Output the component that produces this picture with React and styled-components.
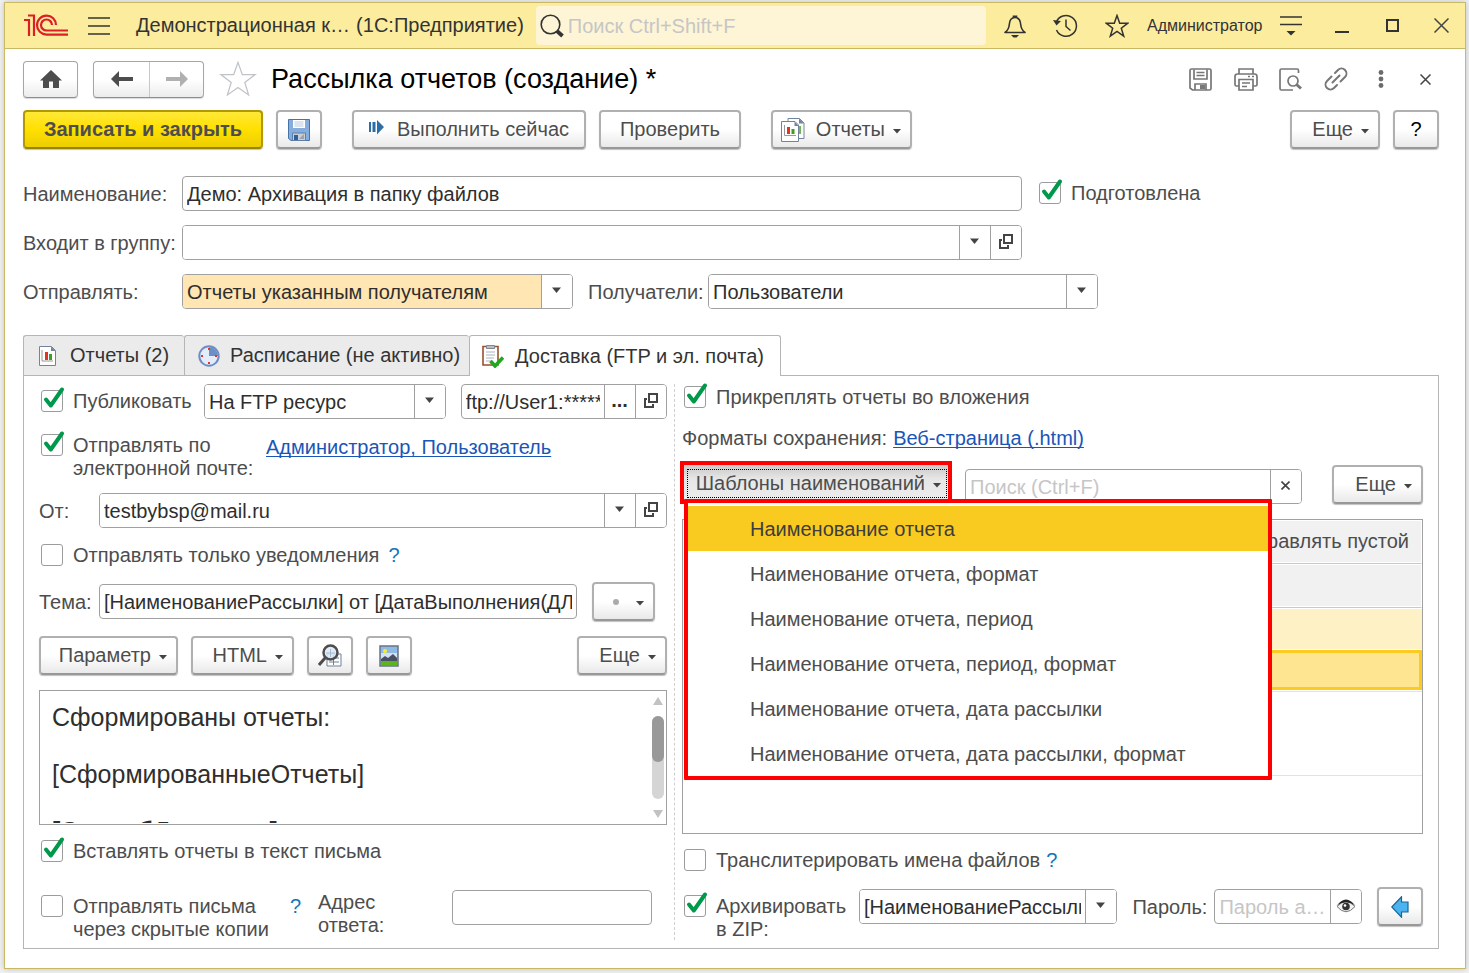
import React from "react";
import styled, { createGlobalStyle, css } from "styled-components";

const GlobalStyle = createGlobalStyle`
  * {
    box-sizing: border-box;
  }
  body {
    margin: 0;
    background: #f1f1f1;
    color: #4d4d4d;
    font: 20px/23px "Liberation Sans", Arial, sans-serif;
  }
  button, input, select {
    font: inherit;
    color: inherit;
  }
`;

/* ---------- window ---------- */

const Window = styled.div`
  display: flex;
  flex-direction: column;
  min-height: calc(100vh - 6px);
  margin: 2px 3px 4px 4px;
  background: #fff;
  border: 1px solid #c9b965;
  box-shadow: 0 0 6px rgba(0, 0, 0, 0.2);
`;

const TitleBar = styled.header`
  display: flex;
  align-items: center;
  height: 46px;
  padding-left: 19px;
  background: #fbec9e;
  border-bottom: 1px solid #c9b965;
  color: #333;
`;

const PlainButton = styled.button`
  display: flex;
  align-items: center;
  justify-content: center;
  flex: none;
  width: ${(props) => props.$width || 51}px;
  height: 36px;
  padding: 0;
  border: 0;
  background: none;
  cursor: pointer;
`;

const AppTitle = styled.div`
  display: flex;
  gap: 6px;
  padding-left: 8px;
  white-space: nowrap;
`;

const GlobalSearch = styled.label`
  display: flex;
  flex: 1;
  align-items: center;
  gap: 4px;
  min-width: 0;
  height: 39px;
  margin: 0 3px 0 12px;
  padding-left: 4px;
  background: #fdf5d5;
  border-radius: 4px;
`;

const SearchInput = styled.input`
  flex: 1;
  min-width: 0;
  padding: 1px 0 0;
  border: 0;
  outline: 0;
  background: none;
  &::placeholder {
    color: #c6c6c6;
  }
`;

const User = styled.button`
  width: 123px;
  padding: 0 0 0 5px;
  border: 0;
  background: none;
  font-size: 16px;
  text-align: left;
`;

/* ---------- form head ---------- */

const FormHead = styled.div`
  display: flex;
  align-items: center;
  margin-top: 11px;
  padding: 0 17px 0 18px;
`;

const NavGroup = styled.div`
  display: flex;
  height: 37px;
  margin-right: 15px;
  border: 1px solid #a6a6a6;
  border-bottom-color: #8e8e8e;
  border-radius: 4px;
  background: linear-gradient(#fff 50%, #ececec);
  box-shadow: 0 1px 1px rgba(0, 0, 0, 0.15);
`;

const NavButton = styled.button`
  display: flex;
  align-items: center;
  justify-content: center;
  width: ${(props) => props.$width}px;
  padding: 0;
  border: 0;
  background: none;
  & + & {
    border-left: 1px solid #c8c8c8;
  }
`;

const Title = styled.h1`
  flex: 1;
  margin: 0 0 0 14px;
  color: #000;
  font-size: 27px;
  font-weight: 400;
  line-height: 32px;
  white-space: nowrap;
`;

const Body = styled.main`
  display: flex;
  flex: 1;
  flex-direction: column;
  padding: 12px 26px 19px 18px;
`;

const Toolbar = styled.div`
  display: flex;
  gap: 13px;
  margin-bottom: 27px;
`;

const Spacer = styled.span`
  width: ${(props) => props.$width}px;
  flex: ${(props) => (props.$width ? "none" : 1)};
`;

const Button = styled.button`
  display: flex;
  align-items: center;
  justify-content: center;
  gap: ${(props) => props.$gap || 8}px;
  flex: none;
  width: ${(props) => (props.$width ? props.$width + "px" : "auto")};
  height: 39px;
  padding: 0;
  border: 2px solid #b0b0b0;
  border-bottom-color: #989898;
  border-radius: 4px;
  background: linear-gradient(#fff 50%, #e9e9e9);
  box-shadow: 0 1px 1px rgba(0, 0, 0, 0.25);
  white-space: nowrap;
  cursor: pointer;
  ${(props) =>
    props.$menu &&
    css`
      justify-content: flex-end;
      padding-right: 9px;
    `}
  ${(props) =>
    props.$primary &&
    css`
      border-color: #b09a00;
      border-bottom-color: #978400;
      background: linear-gradient(#ffe838, #ffe000 50%, #edce00);
      font-weight: 700;
    `}
`;

const HelpButton = styled(Button)`
  color: #000;
`;

/* ---------- fields ---------- */

const Row = styled.div`
  display: flex;
  flex: none;
  align-items: ${(props) => props.$align || "center"};
  gap: ${(props) => props.$gap || 0}px;
  height: ${(props) => (props.$height ? props.$height + "px" : "auto")};
  margin-top: ${(props) => props.$top || 0}px;
  padding-right: ${(props) => props.$right || 0}px;
`;

const Label = styled.label`
  flex: none;
  width: ${(props) => (props.$width ? props.$width + "px" : "auto")};
  padding-top: ${(props) => props.$top || 2}px;
  white-space: nowrap;
`;

const Field = styled.div`
  display: flex;
  flex: ${(props) => props.$grow || 1} 1 0;
  min-width: 0;
  max-width: ${(props) => (props.$max ? props.$max + "px" : "none")};
  height: 35px;
  overflow: hidden;
  border: 1px solid #a0a0a0;
  border-radius: 4px;
  background: #fff;
  color: #2e2e2e;
`;

const Input = styled.input`
  flex: 1;
  min-width: 0;
  padding: 2px 4px 0;
  border: 0;
  outline: 0;
  background: none;
  text-overflow: ${(props) => (props.$ellipsis ? "ellipsis" : "clip")};
  &::placeholder {
    color: #c6c6c6;
  }
`;

const SelectBox = styled.div`
  display: grid;
  flex: 1;
  grid-template-columns: minmax(0, 1fr) 31px;
  min-width: 0;
`;

const Select = styled.select`
  grid-area: 1 / 1 / 2 / 3;
  min-width: 0;
  padding: 2px 35px 0 4px;
  border: 0;
  outline: 0;
  appearance: none;
  background: ${(props) => (props.$marked ? "#ffe6b3" : "#fff")};
`;

const cell = css`
  display: flex;
  align-items: center;
  justify-content: center;
  padding: 0 1px 2px 0;
  border: 0;
  border-left: 1px solid #a0a0a0;
  background: #fff;
`;

const ArrowCell = styled.span`
  ${cell}
  grid-area: 1 / 2 / 2 / 3;
  pointer-events: none;
`;

const CellButton = styled.button`
  ${cell}
  flex: none;
  width: 31px;
  font-weight: 700;
`;

const CheckLabel = styled.label`
  display: flex;
  flex: none;
  gap: 10px;
  width: ${(props) => (props.$width ? props.$width + "px" : "auto")};
  margin-left: ${(props) => props.$left || 0}px;
  padding: ${(props) => props.$top || 0}px 0 0 2px;
  white-space: nowrap;
`;

const CheckBox = styled.span`
  position: relative;
  flex: none;
  width: 22px;
  height: 22px;
  svg {
    position: absolute;
    left: 0;
    bottom: 0;
    pointer-events: none;
  }
`;

const CheckInput = styled.input`
  display: block;
  width: 22px;
  height: 22px;
  margin: 0;
  appearance: none;
  border: 1px solid #9c9c9c;
  border-radius: 3px;
  background: #fff;
`;

const Link = styled.a`
  padding-top: ${(props) => props.$top || 0}px;
  color: #1a56b8;
  text-decoration: underline 1px;
  text-decoration-skip-ink: none;
  text-underline-offset: 2px;
  white-space: nowrap;
`;

const Hint = styled.button`
  width: 12px;
  margin-left: ${(props) => props.$left || 0}px;
  padding: ${(props) => props.$top || 0}px 0 0;
  border: 0;
  background: none;
  color: #0f76bc;
  text-align: left;
`;

const ArchiveFields = styled.div`
  display: flex;
  flex: 1;
  align-items: center;
  gap: 15px;
  min-width: 0;
`;

/* ---------- tabs ---------- */

const Tabs = styled.div`
  display: flex;
  margin-top: 26px;
`;

const Tab = styled.button`
  display: flex;
  align-items: center;
  gap: ${(props) => props.$gap}px;
  width: ${(props) => props.$width}px;
  height: 40px;
  padding: 0 0 0 ${(props) => props.$left}px;
  border: 1px solid #b5b5b5;
  border-bottom: 0;
  border-right-width: ${(props) => (props.$active ? 1 : 0)}px;
  border-radius: 3px 3px 0 0;
  background: #ebebeb;
  color: #333;
  white-space: nowrap;
  ${(props) =>
    props.$active &&
    css`
      z-index: 1;
      height: 41px;
      margin-bottom: -1px;
      background: #fff;
    `}
`;

const Panel = styled.section`
  display: grid;
  flex: 1;
  grid-template-columns: minmax(0, 628fr) 15px minmax(0, 741fr);
  padding: 0 15px 8px;
  border: 1px solid #b5b5b5;
`;

const Column = styled.div`
  display: flex;
  flex-direction: column;
  min-width: 0;
  padding-top: ${(props) => props.$top}px;
`;

const Divider = styled.div`
  width: 8px;
  margin-top: 8px;
  border-right: 1px dashed #cfcfcf;
`;

/* ---------- letter editor ---------- */

const Editor = styled.div`
  display: flex;
  flex: 1 1 134px;
  min-height: 0;
  margin-top: 15px;
  overflow: hidden;
  border: 1px solid #a0a0a0;
`;

const EditorText = styled.div`
  flex: 1;
  height: 132px;
  padding: 12px 0 0 12px;
  overflow: hidden;
  outline: 0;
  color: #2e2e2e;
  font-size: 25px;
  line-height: 29px;
  p {
    margin: 0 0 28px;
  }
`;

const ScrollBar = styled.div`
  display: flex;
  flex-direction: column;
  align-items: center;
  width: 16px;
  padding: 6px 0;
  gap: 11px;
`;

const Track = styled.div`
  flex: 1;
  width: 12px;
  border-radius: 6px;
  background: #d5d5d5;
`;

const Thumb = styled.div`
  height: 46px;
  border-radius: 6px;
  background: #999;
`;

/* ---------- templates menu and table ---------- */

const MenuAnchor = styled.div`
  position: relative;
  flex: none;
  align-self: flex-start;
`;

const TemplatesButton = styled.button`
  display: flex;
  width: 268px;
  height: 39px;
  padding: 6px 3px 4px 5px;
  border: 0;
  background: linear-gradient(#c4c4c4, #e6e6e6 40%, #ededed);
  outline: 4px solid #f00;
  outline-offset: -2px;
`;

const FocusRing = styled.span`
  display: flex;
  flex: 1;
  align-items: center;
  justify-content: flex-end;
  gap: 8px;
  height: 29px;
  padding-right: 5px;
  border: 1px dotted #000;
`;

const Menu = styled.div`
  position: absolute;
  top: 36px;
  left: 2px;
  z-index: 2;
  display: flex;
  flex-direction: column;
  width: 588px;
  padding-top: 3px;
  border: 4px solid #f00;
  border-radius: 1px;
  background: #fff;
`;

const MenuItem = styled.button`
  height: 45px;
  padding: 2px 0 0 62px;
  border: 0;
  background: ${(props) => (props.$active ? "#f9ca1f" : "none")};
  color: ${(props) => (props.$active ? "#3d3d3d" : "inherit")};
  text-align: left;
`;

const TableBox = styled.div`
  flex: 1;
  margin-top: 15px;
  padding-left: 1px;
  border: 1px solid #a0a0a0;
`;

const Table = styled.table`
  width: 100%;
  border-collapse: separate;
  border-spacing: 0;
  th {
    height: 44px;
    padding: 0 12px 2px 0;
    border: 1px solid #fff;
    border-bottom: 1px solid #c9c9c9;
    background: #f1f1f1;
    box-shadow: inset 0 -1px #fff;
    font-weight: 400;
    text-align: right;
  }
`;

const Td = styled.td`
  height: ${(props) => props.$height}px;
  padding: 0;
  border-bottom: 1px solid #e2e2e2;
  ${(props) =>
    props.$tone === "light" &&
    css`
      border-top: 1px solid #fff;
      border-bottom: 1px solid #fff;
      background: #fdf1c5;
    `}
  ${(props) =>
    props.$tone === "current" &&
    css`
      border: 3px solid #fbca23;
      background: #fee591;
    `}
`;

/* ---------- icons ---------- */

const Caret = () => (
  <svg width="8" height="9" viewBox="0 0 8 9">
    <path d="M0 4h8L4 8.6z" fill="#444" />
  </svg>
);

const Arrow = () => (
  <svg width="9" height="7" viewBox="0 0 9 7">
    <path d="M0 .5h9L4.5 6z" fill="#444" />
  </svg>
);

const OpenIcon = () => (
  <svg width="16" height="16" viewBox="0 0 16 16" fill="none" stroke="#444" strokeWidth="2">
    <path d="M6 1h8v8H6z" />
    <path d="M4 6H2v8h8v-3" />
  </svg>
);

const Logo = () => (
  <svg width="46" height="24" viewBox="0 0 46 24" fill="none" stroke="#dc1f26" strokeWidth="2.2">
    <path d="M0 6h5v16M4 1.5h6V22" />
    <path d="M32 11a9.5 9.5 0 1 0-9.500 9.600H44" />
    <path d="M28 11a5.500 5.500 0 1 0-5.500 5.500H44" />
  </svg>
);

const BurgerIcon = () => (
  <svg width="22" height="18" viewBox="0 0 22 18" stroke="#333" strokeWidth="1.5">
    <path d="M0 1h22M0 9h22M0 17h22" />
  </svg>
);

const SearchIcon = () => (
  <svg width="24" height="24" viewBox="0 0 24 24" fill="none" stroke="#333">
    <circle cx="10.5" cy="10.5" r="9.3" strokeWidth="1.6" />
    <path d="M17 17l5.5 5" strokeWidth="3.8" />
  </svg>
);

const BellIcon = () => (
  <svg width="24" height="24" viewBox="0 0 24 24" fill="none" stroke="#333" strokeWidth="1.6">
    <path
      d="M2 18.500c3.500-2.500 4-4.500 4.300-8C6.600 6 8.500 3.500 12 3.500s5.400 2.500 5.700 7c.3 3.500.8 5.500 4.300 8z"
      strokeLinejoin="round"
    />
    <path d="M10.500 3.500V2.200h3v1.300" />
    <path d="M8 21h8l-2.500 2.500h-3z" fill="#333" stroke="none" />
  </svg>
);

const HistoryIcon = () => (
  <svg width="25" height="24" viewBox="0 0 25 24" fill="none" stroke="#333" strokeWidth="1.5">
    <path d="M3.200 8.500A10.400 10.400 0 1 1 3.500 16" />
    <path d="M0 6l8 1-4.500 4.500z" fill="#333" stroke="none" />
    <path d="M13 5.500v7l4.500 4" />
  </svg>
);

const StarIcon = ({ size = 24, color = "#333", width = 1.5 }) => (
  <svg width={size} height={size} viewBox="0 0 24 24" fill="none" stroke={color} strokeWidth={width}>
    <path d="M12 1.500l2.700 7.700h8.100l-6.500 5 2.400 7.900-6.700-4.700-6.700 4.700 2.400-7.900-6.500-5h8.100z" />
  </svg>
);

const ServiceIcon = () => (
  <svg width="22" height="21" viewBox="0 0 22 21">
    <path d="M0 2h22M0 9.500h22" stroke="#333" strokeWidth="1.6" />
    <path d="M6.500 16h9L11 20.500z" fill="#333" />
  </svg>
);

const MinimizeIcon = () => (
  <svg width="14" height="15" viewBox="0 0 14 15">
    <path d="M0 14h14" stroke="#333" strokeWidth="2" />
  </svg>
);

const MaximizeIcon = () => (
  <svg width="13" height="13" viewBox="0 0 13 13">
    <path d="M1 1h11v11H1z" fill="none" stroke="#333" strokeWidth="2" />
  </svg>
);

const CloseIcon = ({ size = 15, width = 1.5 }) => (
  <svg width={size} height={size} viewBox={`0 0 ${size} ${size}`}>
    <path
      d={`M.5.5l${size - 1} ${size - 1}M${size - 0.5}.5l${1 - size} ${size - 1}`}
      stroke="#444"
      strokeWidth={width}
    />
  </svg>
);

const HomeIcon = () => (
  <svg width="22" height="19" viewBox="0 0 22 19">
    <path d="M11 0L0 10.500h3V18h6v-6.500h4V18h6v-7.500h3z" fill="#4d4d4d" />
  </svg>
);

const ArrowIcon = ({ color, flip }) => (
  <svg width="22" height="16" viewBox="0 0 22 16">
    <path d={flip ? "M22 8l-8-8v6H0v4h14v6z" : "M0 8l8-8v6h14v4H8v6z"} fill={color} />
  </svg>
);

const GrayFloppyIcon = () => (
  <svg width="23" height="23" viewBox="0 0 23 23" fill="none" stroke="#777" strokeWidth="1.7">
    <path d="M1 2.500Q1 1 2.500 1h18Q22 1 22 2.500v18q0 1.500-1.500 1.500h-17L1 20z" />
    <path d="M5 1.500V11h13V1.500M7.500 4.500h8M7.500 7.500h8M6 22v-6h11v6" />
    <path d="M11 17h5v4h-5z" fill="#777" stroke="none" />
  </svg>
);

const PrinterIcon = () => (
  <svg width="24" height="23" viewBox="0 0 24 23" fill="none" stroke="#777" strokeWidth="1.7">
    <path d="M5 6V1h14v5M5 18H2.500Q1 18 1 16.500v-8Q1 6 3.500 6h17Q23 6 23 8.500v8q0 1.500-1.500 1.500H19" />
    <path d="M5 11.500h14V22H5zM8 15h8M8 18.500h5M14 8.500h2M18 8.500h2" />
  </svg>
);

const PreviewIcon = () => (
  <svg width="23" height="23" viewBox="0 0 23 23" fill="none" stroke="#777" strokeWidth="1.7">
    <path d="M19.500 5V2.500Q19.500 1 18 1H2.500Q1 1 1 2.500v18Q1 22 2.500 22H14" />
    <circle cx="14" cy="13" r="5" />
    <path d="M17.500 16.500l4.500 4" strokeWidth="3" />
  </svg>
);

const LinkIcon = () => (
  <svg width="24" height="24" viewBox="0 0 24 24" fill="none" stroke="#777" strokeWidth="2" strokeLinecap="round">
    <path d="M11 6l3-3a4.800 4.800 0 0 1 7 7l-4.500 4.500" />
    <path d="M13 18l-3 3a4.800 4.800 0 0 1-7-7l4.500-4.500" />
    <path d="M8.500 15.500l7-7" />
  </svg>
);

const DotsIcon = () => (
  <svg width="6" height="18" viewBox="0 0 6 18" fill="#6b6b6b">
    <circle cx="3" cy="2.500" r="2.400" />
    <circle cx="3" cy="9" r="2.400" />
    <circle cx="3" cy="15.500" r="2.400" />
  </svg>
);

const BlueFloppyIcon = () => (
  <svg width="22" height="22" viewBox="0 0 22 22">
    <path d="M.5.500h21v21H3l-2.500-2z" fill="#86aedd" stroke="#4673a8" />
    <path d="M5 1h12v8H5z" fill="#fff" />
    <path d="M6.500 3h9M6.500 5h9M6.500 7h9" stroke="#b8c9de" />
    <path d="M4.500 14h13v7.500h-13z" fill="#c9ced6" stroke="#5f7fa6" />
    <path d="M6 16h4v5H6z" fill="#2d609c" />
    <path d="M11 20l5-5v5z" fill="#9ba1aa" />
  </svg>
);

const RunIcon = () => (
  <svg width="15" height="19" viewBox="0 0 15 19" fill="#2c6ea6">
    <path d="M0 2h2v10H0zM3.500 2h3v10h-3zM8 0l7 7-7 7.500z" />
  </svg>
);

const ReportIcon = () => (
  <svg width="17" height="20" viewBox="0 0 17 20">
    <path d="M.5.500h12l4 4v15H.500z" fill="#fff" stroke="#72849a" />
    <path d="M12 .5l4.500 4.500H12z" fill="#72849a" />
    <path d="M3 4v11h11" fill="none" stroke="#999" />
    <path d="M6 6h3v8H6z" fill="#e3341f" />
    <path d="M10 8h3v6h-3z" fill="#3e9e1d" />
  </svg>
);

const ReportsIcon = () => (
  <svg width="27" height="24" viewBox="0 0 27 24">
    <path d="M7 .5h11.500l4.500 4.500v15.500H7z" fill="#fff" stroke="#72849a" />
    <path d="M18 .5L23 5.500h-5z" fill="#72849a" />
    <path d="M18 8h2v8h-2z" fill="#6fb95a" />
    <path d="M.5 3.500H14l3.500 3.500v16.500H.500z" fill="#fff" stroke="#72849a" />
    <path d="M13.500 3.500l4 4.500h-4z" fill="#72849a" />
    <path d="M3.500 7v10.500H15" fill="none" stroke="#999" />
    <path d="M6 9h3v7H6z" fill="#e3341f" />
    <path d="M10.500 11h3v5h-3z" fill="#3e9e1d" />
  </svg>
);

const ClockIcon = () => (
  <svg width="22" height="22" viewBox="0 0 22 22">
    <circle cx="11" cy="11" r="9.700" fill="#e3ecf9" stroke="#6d8fc5" strokeWidth="2" />
    <path d="M11 11V2a9 9 0 0 1 9 9z" fill="#6d8fc5" />
    <path d="M10 3h2v2h-2zM10 17h2v2h-2zM3 10h2v2H3zM17 10h2v2h-2z" fill="#e8332a" />
  </svg>
);

const ClipboardIcon = () => (
  <svg width="22" height="24" viewBox="0 0 22 24">
    <path d="M1 2.500h15v18.500H1z" fill="#fff" stroke="#9c4f2c" strokeWidth="1.600" />
    <path d="M4.500 1.500h8v3h-8z" fill="#b9bdc4" stroke="#83878e" />
    <path d="M4 8h9M4 11h9M4 14h8M4 17h5" stroke="#a9b3c0" />
    <path d="M8.500 17l4.500 5 8-8.500" fill="none" stroke="#1da81d" strokeWidth="3.500" />
  </svg>
);

const LoupeIcon = () => (
  <svg width="24" height="24" viewBox="0 0 24 24">
    <path d="M9 10h14v12H9z" fill="#fff" stroke="#6d8197" />
    <path d="M11 14h10M11 18h10M15.500 11v10" stroke="#6d8197" />
    <circle cx="12.500" cy="8.500" r="7" fill="#dbe9f8" fillOpacity=".85" stroke="#4d4d4d" strokeWidth="2.500" />
    <path d="M7.500 13.500L1 21" stroke="#4d4d4d" strokeWidth="3" />
    <path d="M8 9h9M12.500 5v8" stroke="#a8bdd4" />
  </svg>
);

const PictureIcon = () => (
  <svg width="20" height="22" viewBox="0 0 20 22">
    <path d="M1 1h18v20H1z" fill="#8fb9e6" stroke="#6a7683" strokeWidth="1.500" />
    <path d="M2 8h16v7H2z" fill="#cfe3f6" />
    <circle cx="6" cy="6" r="2" fill="#ffec1f" />
    <path d="M2 14l4-3 3 2 5-4 4 4v3H2z" fill="#4a4f66" />
    <path d="M2 16h16v4H2z" fill="#5bb51d" />
  </svg>
);

const EyeIcon = () => (
  <svg width="20" height="16" viewBox="0 0 20 16">
    <path d="M1 8.500Q10-1 19 8.500 10 19 1 8.500z" fill="#f2f2f2" stroke="#777" />
    <path d="M.5 8Q10-5 19.500 8 10 .5.5 8z" fill="#222" />
    <circle cx="10" cy="8.500" r="3.800" fill="#333" />
    <circle cx="9" cy="7.500" r="1.300" fill="#fff" />
  </svg>
);

const BlueArrowIcon = () => (
  <svg width="18" height="22" viewBox="0 0 18 22">
    <path d="M.800 11L10.500.800V6H17v10h-6.500v5.200z" fill="#4bb3ef" stroke="#1b6694" strokeWidth="1.200" />
  </svg>
);

const DotIcon = () => (
  <svg width="6" height="6" viewBox="0 0 6 6">
    <circle cx="3" cy="3" r="3" fill="#aaa" />
  </svg>
);

const ScrollArrow = ({ down }) => (
  <svg width="10" height="8" viewBox="0 0 10 8">
    <path d={down ? "M0 0h10L5 8z" : "M0 8h10L5 0z"} fill="#c2c2c2" />
  </svg>
);

/* ---------- parts ---------- */

const Check = ({ children, checked, ...rest }) => (
  <CheckLabel {...rest}>
    <CheckBox>
      <CheckInput type="checkbox" defaultChecked={checked} />
      {checked && (
        <svg width="25" height="26" viewBox="0 0 25 26">
          <path
            d="M5 13.500l4.800 6L21 3.500"
            fill="none"
            stroke="#00984a"
            strokeWidth="4"
            strokeLinejoin="round"
            strokeLinecap="round"
          />
        </svg>
      )}
    </CheckBox>
    <span>{children}</span>
  </CheckLabel>
);

const Combo = ({ id, label, value, marked, open, ...rest }) => (
  <Field {...rest}>
    <SelectBox>
      <Select id={id} aria-label={label} $marked={marked}>
        <option>{value}</option>
      </Select>
      <ArrowCell>
        <Arrow />
      </ArrowCell>
    </SelectBox>
    {open && (
      <CellButton aria-label="Открыть">
        <OpenIcon />
      </CellButton>
    )}
  </Field>
);

const MenuButton = ({ children, ...rest }) => (
  <Button $menu {...rest}>
    {children}
    <Caret />
  </Button>
);

const templates = [
  "Наименование отчета",
  "Наименование отчета, формат",
  "Наименование отчета, период",
  "Наименование отчета, период, формат",
  "Наименование отчета, дата рассылки",
  "Наименование отчета, дата рассылки, формат",
];

const DeliveryLeft = () => (
  <Column $top={8}>
    <Row $gap={15}>
      <Check checked $width={150}>Публиковать</Check>
      <Combo label="Куда публиковать" value="На FTP ресурс" $grow={242} />
      <Field $grow={206}>
        <Input aria-label="Адрес FTP" defaultValue="ftp://User1:********" />
        <CellButton aria-label="Выбрать">...</CellButton>
        <CellButton aria-label="Открыть">
          <OpenIcon />
        </CellButton>
      </Field>
    </Row>
    <Row $top={15} $height={44} $align="flex-start">
      <Check checked $width={227}>
        Отправлять по
        <br />
        электронной почте:
      </Check>
      <Link href="#recipients" $top={2}>Администратор, Пользователь</Link>
    </Row>
    <Row $top={15}>
      <Label htmlFor="from" $width={60}>От:</Label>
      <Combo id="from" value="testbybsp@mail.ru" open />
    </Row>
    <Row $top={16}>
      <Check>Отправлять только уведомления</Check>
      <Hint $left={9} aria-label="Подсказка">?</Hint>
    </Row>
    <Row $top={15} $right={12}>
      <Label htmlFor="subject" $width={60}>Тема:</Label>
      <Field>
        <Input id="subject" defaultValue="[НаименованиеРассылки] от [ДатаВыполнения(ДЛФ='D')]" />
      </Field>
      <Spacer $width={15} />
      <MenuButton $width={63} $gap={17} aria-label="Параметры темы">
        <DotIcon />
      </MenuButton>
    </Row>
    <Row $top={15} $gap={13}>
      <MenuButton $width={139}>Параметр</MenuButton>
      <MenuButton $width={103}>HTML</MenuButton>
      <Button $width={46} aria-label="Просмотр">
        <LoupeIcon />
      </Button>
      <Button $width={46} aria-label="Картинка">
        <PictureIcon />
      </Button>
      <Spacer />
      <MenuButton $width={90}>Еще</MenuButton>
    </Row>
    <Editor>
      <EditorText contentEditable suppressContentEditableWarning role="textbox" aria-label="Текст письма">
        <p>Сформированы отчеты:</p>
        <p>[СформированныеОтчеты]</p>
        <p>
          <b>[СпособДоставки]</b>
        </p>
      </EditorText>
      <ScrollBar>
        <ScrollArrow />
        <Track>
          <Thumb />
        </Track>
        <ScrollArrow down />
      </ScrollBar>
    </Editor>
    <Row $top={15}>
      <Check checked>Вставлять отчеты в текст письма</Check>
    </Row>
    <Row $top={27} $height={50} $align="flex-start" $right={15}>
      <Check $width={251} $top={5}>
        Отправлять письма
        <br />
        через скрытые копии
      </Check>
      <Hint $top={5} aria-label="Подсказка">?</Hint>
      <Spacer $width={16} />
      <Label htmlFor="reply" $width={134} $top={1}>
        Адрес
        <br />
        ответа:
      </Label>
      <Field>
        <Input id="reply" />
      </Field>
    </Row>
  </Column>
);

const DeliveryRight = () => (
  <Column $top={10}>
    <Row>
      <Check checked>Прикреплять отчеты во вложения</Check>
    </Row>
    <Row $top={18} $gap={6}>
      <span>Форматы сохранения:</span>
      <Link href="#formats">Веб-страница (.html)</Link>
    </Row>
    <Row $top={13} $height={41} $align="flex-end">
      <MenuAnchor>
        <TemplatesButton>
          <FocusRing>
            Шаблоны наименований
            <Caret />
          </FocusRing>
        </TemplatesButton>
        <Menu role="menu">
          {templates.map((item, i) => (
            <MenuItem key={item} role="menuitem" $active={i === 0}>
              {item}
            </MenuItem>
          ))}
        </Menu>
      </MenuAnchor>
      <Spacer $width={15} />
      <Field>
        <Input aria-label="Поиск" placeholder="Поиск (Ctrl+F)" />
        <CellButton aria-label="Очистить">
          <CloseIcon size={9} width={1.6} />
        </CellButton>
      </Field>
      <Spacer $width={30} />
      <MenuButton $width={91}>Еще</MenuButton>
    </Row>
    <TableBox>
      <Table>
        <thead>
          <tr>
            <th>Отправлять пустой</th>
          </tr>
          <tr>
            <th />
          </tr>
        </thead>
        <tbody>
          <tr>
            <Td $height={42} $tone="light" />
          </tr>
          <tr>
            <Td $height={40} $tone="current" />
          </tr>
          <tr>
            <Td $height={2} />
          </tr>
          <tr>
            <Td $height={84} />
          </tr>
        </tbody>
      </Table>
    </TableBox>
    <Row $top={15}>
      <Check>Транслитерировать имена файлов</Check>
      <Hint $left={6} aria-label="Подсказка">?</Hint>
    </Row>
    <Row $top={15} $height={53} $align="flex-start">
      <Check checked $width={177} $top={8}>
        Архивировать
        <br />
        в ZIP:
      </Check>
      <ArchiveFields>
        <Combo label="Имя архива" value="[НаименованиеРассылки]_[ДатаВыполнения]" $grow={259} />
        <Label htmlFor="password" $width={67}>Пароль:</Label>
        <Field $grow={147}>
          <Input id="password" type="password" placeholder="Пароль архива" $ellipsis />
          <CellButton aria-label="Показать пароль">
            <EyeIcon />
          </CellButton>
        </Field>
        <Button $width={46} aria-label="Вставить">
          <BlueArrowIcon />
        </Button>
      </ArchiveFields>
    </Row>
  </Column>
);

export default function App() {
  return (
    <>
      <GlobalStyle />
      <Window>
        <TitleBar>
          <Logo />
          <PlainButton $width={58} aria-label="Меню">
            <BurgerIcon />
          </PlainButton>
          <AppTitle>
            <span>Демонстрационная к…</span>
            <span>(1С:Предприятие)</span>
          </AppTitle>
          <GlobalSearch>
            <SearchIcon />
            <SearchInput aria-label="Поиск" placeholder="Поиск Ctrl+Shift+F" />
          </GlobalSearch>
          <PlainButton aria-label="Уведомления">
            <BellIcon />
          </PlainButton>
          <PlainButton aria-label="История">
            <HistoryIcon />
          </PlainButton>
          <PlainButton aria-label="Избранное">
            <StarIcon />
          </PlainButton>
          <User>Администратор</User>
          <PlainButton aria-label="Сервис">
            <ServiceIcon />
          </PlainButton>
          <PlainButton aria-label="Свернуть">
            <MinimizeIcon />
          </PlainButton>
          <PlainButton aria-label="Развернуть">
            <MaximizeIcon />
          </PlainButton>
          <PlainButton $width={47} aria-label="Закрыть">
            <CloseIcon />
          </PlainButton>
        </TitleBar>

        <FormHead>
          <NavGroup>
            <NavButton $width={53} aria-label="Начальная страница">
              <HomeIcon />
            </NavButton>
          </NavGroup>
          <NavGroup>
            <NavButton $width={55} aria-label="Назад">
              <ArrowIcon color="#4d4d4d" />
            </NavButton>
            <NavButton $width={54} aria-label="Вперед">
              <ArrowIcon color="#b0b0b0" flip />
            </NavButton>
          </NavGroup>
          <StarIcon size={38} color="#c0c4ca" width={0.8} />
          <Title>Рассылка отчетов (создание) *</Title>
          <PlainButton $width={45} aria-label="Сохранить">
            <GrayFloppyIcon />
          </PlainButton>
          <PlainButton $width={45} aria-label="Печать">
            <PrinterIcon />
          </PlainButton>
          <PlainButton $width={45} aria-label="Предварительный просмотр">
            <PreviewIcon />
          </PlainButton>
          <PlainButton $width={45} aria-label="Получить ссылку">
            <LinkIcon />
          </PlainButton>
          <PlainButton $width={45} aria-label="Еще действия">
            <DotsIcon />
          </PlainButton>
          <PlainButton $width={45} aria-label="Закрыть форму">
            <CloseIcon size={11} />
          </PlainButton>
        </FormHead>

        <Body>
          <Toolbar>
            <Button $primary $width={240}>Записать и закрыть</Button>
            <Button $width={46} aria-label="Записать">
              <BlueFloppyIcon />
            </Button>
            <Spacer $width={4} />
            <Button $width={234} $gap={13}>
              <RunIcon />
              Выполнить сейчас
            </Button>
            <Button $width={142}>Проверить</Button>
            <Spacer $width={4} />
            <MenuButton $width={141}>
              <ReportsIcon />
              Отчеты
            </MenuButton>
            <Spacer />
            <MenuButton $width={90}>Еще</MenuButton>
            <HelpButton $width={46}>?</HelpButton>
          </Toolbar>

          <Row>
            <Label htmlFor="name" $width={159}>Наименование:</Label>
            <Field $max={840}>
              <Input id="name" defaultValue="Демо: Архивация в папку файлов" />
            </Field>
            <Check checked $left={15}>Подготовлена</Check>
          </Row>
          <Row $top={14}>
            <Label htmlFor="group" $width={159}>Входит в группу:</Label>
            <Combo id="group" value="" open $max={840} />
          </Row>
          <Row $top={14}>
            <Label htmlFor="mode" $width={159}>Отправлять:</Label>
            <Combo id="mode" value="Отчеты указанным получателям" marked $max={391} />
            <Spacer $width={15} />
            <Label htmlFor="to" $width={120}>Получатели:</Label>
            <Combo id="to" value="Пользователи" $max={390} />
          </Row>

          <Tabs role="tablist">
            <Tab role="tab" $width={161} $left={15} $gap={14}>
              <ReportIcon />
              Отчеты (2)
            </Tab>
            <Tab role="tab" $width={285} $left={13} $gap={10}>
              <ClockIcon />
              Расписание (не активно)
            </Tab>
            <Tab role="tab" aria-selected="true" $active $width={312} $left={12} $gap={11}>
              <ClipboardIcon />
              Доставка (FTP и эл. почта)
            </Tab>
          </Tabs>
          <Panel>
            <DeliveryLeft />
            <Divider />
            <DeliveryRight />
          </Panel>
        </Body>
      </Window>
    </>
  );
}
